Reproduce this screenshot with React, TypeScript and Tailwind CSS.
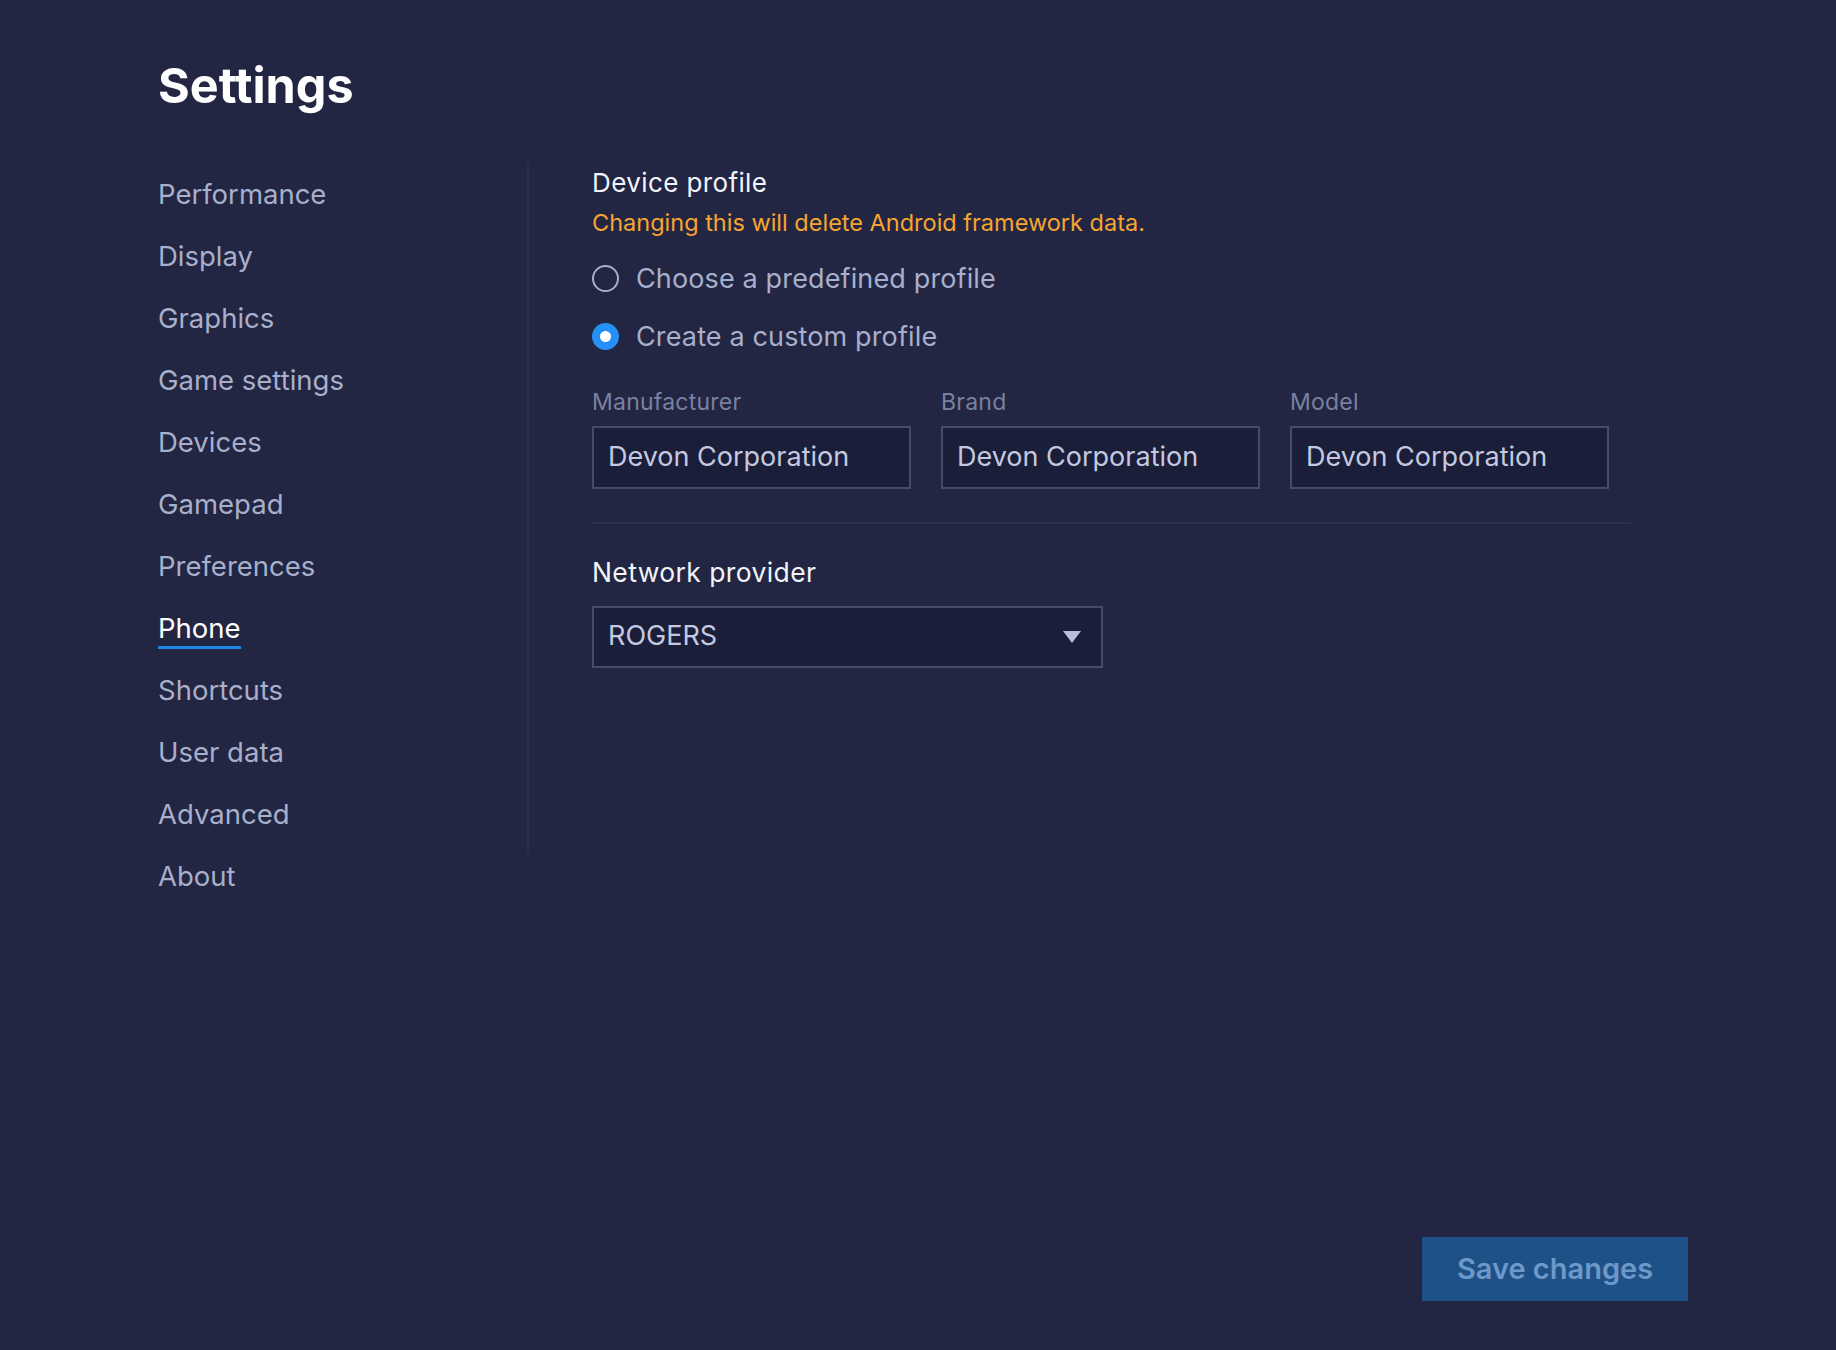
import React from "react";

const navItems = [
  "Performance",
  "Display",
  "Graphics",
  "Game settings",
  "Devices",
  "Gamepad",
  "Preferences",
  "Phone",
  "Shortcuts",
  "User data",
  "Advanced",
  "About",
];

function Field({ label, value }: { label: string; value: string }) {
  return (
    <div className="flex flex-col w-[319px]">
      <div className="text-[23px] leading-[28px] tracking-[0.01em] text-[#7a81a0]">{label}</div>
      <div className="mt-[10px] h-[63px] border-2 border-[#464b69] bg-[#1b1e38] flex items-center px-[14px] text-[27px] text-[#c4c9e0]">
        {value}
      </div>
    </div>
  );
}

function Radio({ checked, label }: { checked: boolean; label: string }) {
  return (
    <div className="flex items-center h-[40px] gap-[17px]">
      {checked ? (
        <div className="w-[27px] h-[27px] rounded-full bg-[#2590f5] flex items-center justify-center">
          <div className="w-[11px] h-[11px] rounded-full bg-white" />
        </div>
      ) : (
        <div className="w-[27px] h-[27px] rounded-full border-2 border-[#a8afcb]" />
      )}
      <span className="text-[27px] leading-[40px] tracking-[0.005em] text-[#a8afcb]">{label}</span>
    </div>
  );
}

export default function App() {
  return (
    <div
      className="min-h-[1350px] w-full bg-[#222642] flex flex-col"
      style={{ fontFamily: "Inter, 'Noto Sans', sans-serif" }}
    >
      <div className="pl-[158px] pt-[62px]">
        <h1 className="text-[48.5px] leading-none font-bold text-white">Settings</h1>
      </div>
      <div className="flex pl-[158px] mt-[52px]">
        <nav className="w-[369px] flex flex-col">
          {navItems.map((item) => {
            const active = item === "Phone";
            return (
              <div key={item} className="h-[62px] flex items-center">
                <span
                  className={
                    "relative text-[27.5px] leading-[32px] " +
                    (active ? "text-white" : "text-[#a8afcb]")
                  }
                >
                  {item}
                  {active && (
                    <span className="absolute left-0 right-0 top-[34px] h-[3px] bg-[#1e88e5]" />
                  )}
                </span>
              </div>
            );
          })}
        </nav>
        <div className="w-[2px] h-[690px] bg-[#2b3050]" />
        <div className="ml-[63px] w-[1039px] pt-[4px] flex flex-col">
          <div className="text-[26px] leading-[32px] tracking-[0.015em] text-[#f2f4fb]">Device profile</div>
          <div className="mt-[10px] text-[23.5px] leading-[28px] text-[#f7a531]">
            Changing this will delete Android framework data.
          </div>
          <div className="mt-[22px]">
            <Radio checked={false} label="Choose a predefined profile" />
          </div>
          <div className="mt-[18px]">
            <Radio checked={true} label="Create a custom profile" />
          </div>
          <div className="mt-[31px] flex gap-[30px]">
            <Field label="Manufacturer" value="Devon Corporation" />
            <Field label="Brand" value="Devon Corporation" />
            <Field label="Model" value="Devon Corporation" />
          </div>
          <div className="mt-[33px] h-[2px] bg-[#2b3050]" />
          <div className="mt-[32px] text-[26.5px] leading-[32px] tracking-[0.015em] text-[#f2f4fb]">Network provider</div>
          <div className="mt-[18px] w-[511px] h-[62px] border-2 border-[#464b69] bg-[#1b1e38] flex items-center justify-between pl-[14px] pr-[20px]">
            <span className="text-[27px] text-[#c4c9e0]">ROGERS</span>
            <svg width="18" height="12" viewBox="0 0 18 12">
              <polygon points="0,0 18,0 9,12" fill="#b8bdd8" />
            </svg>
          </div>
        </div>
      </div>
      <div className="mt-auto self-end mr-[148px] mb-[49px]">
        <button className="w-[266px] h-[64px] bg-[#1f5189] text-[#6d98c8] text-[29px] font-semibold">
          Save changes
        </button>
      </div>
    </div>
  );
}
